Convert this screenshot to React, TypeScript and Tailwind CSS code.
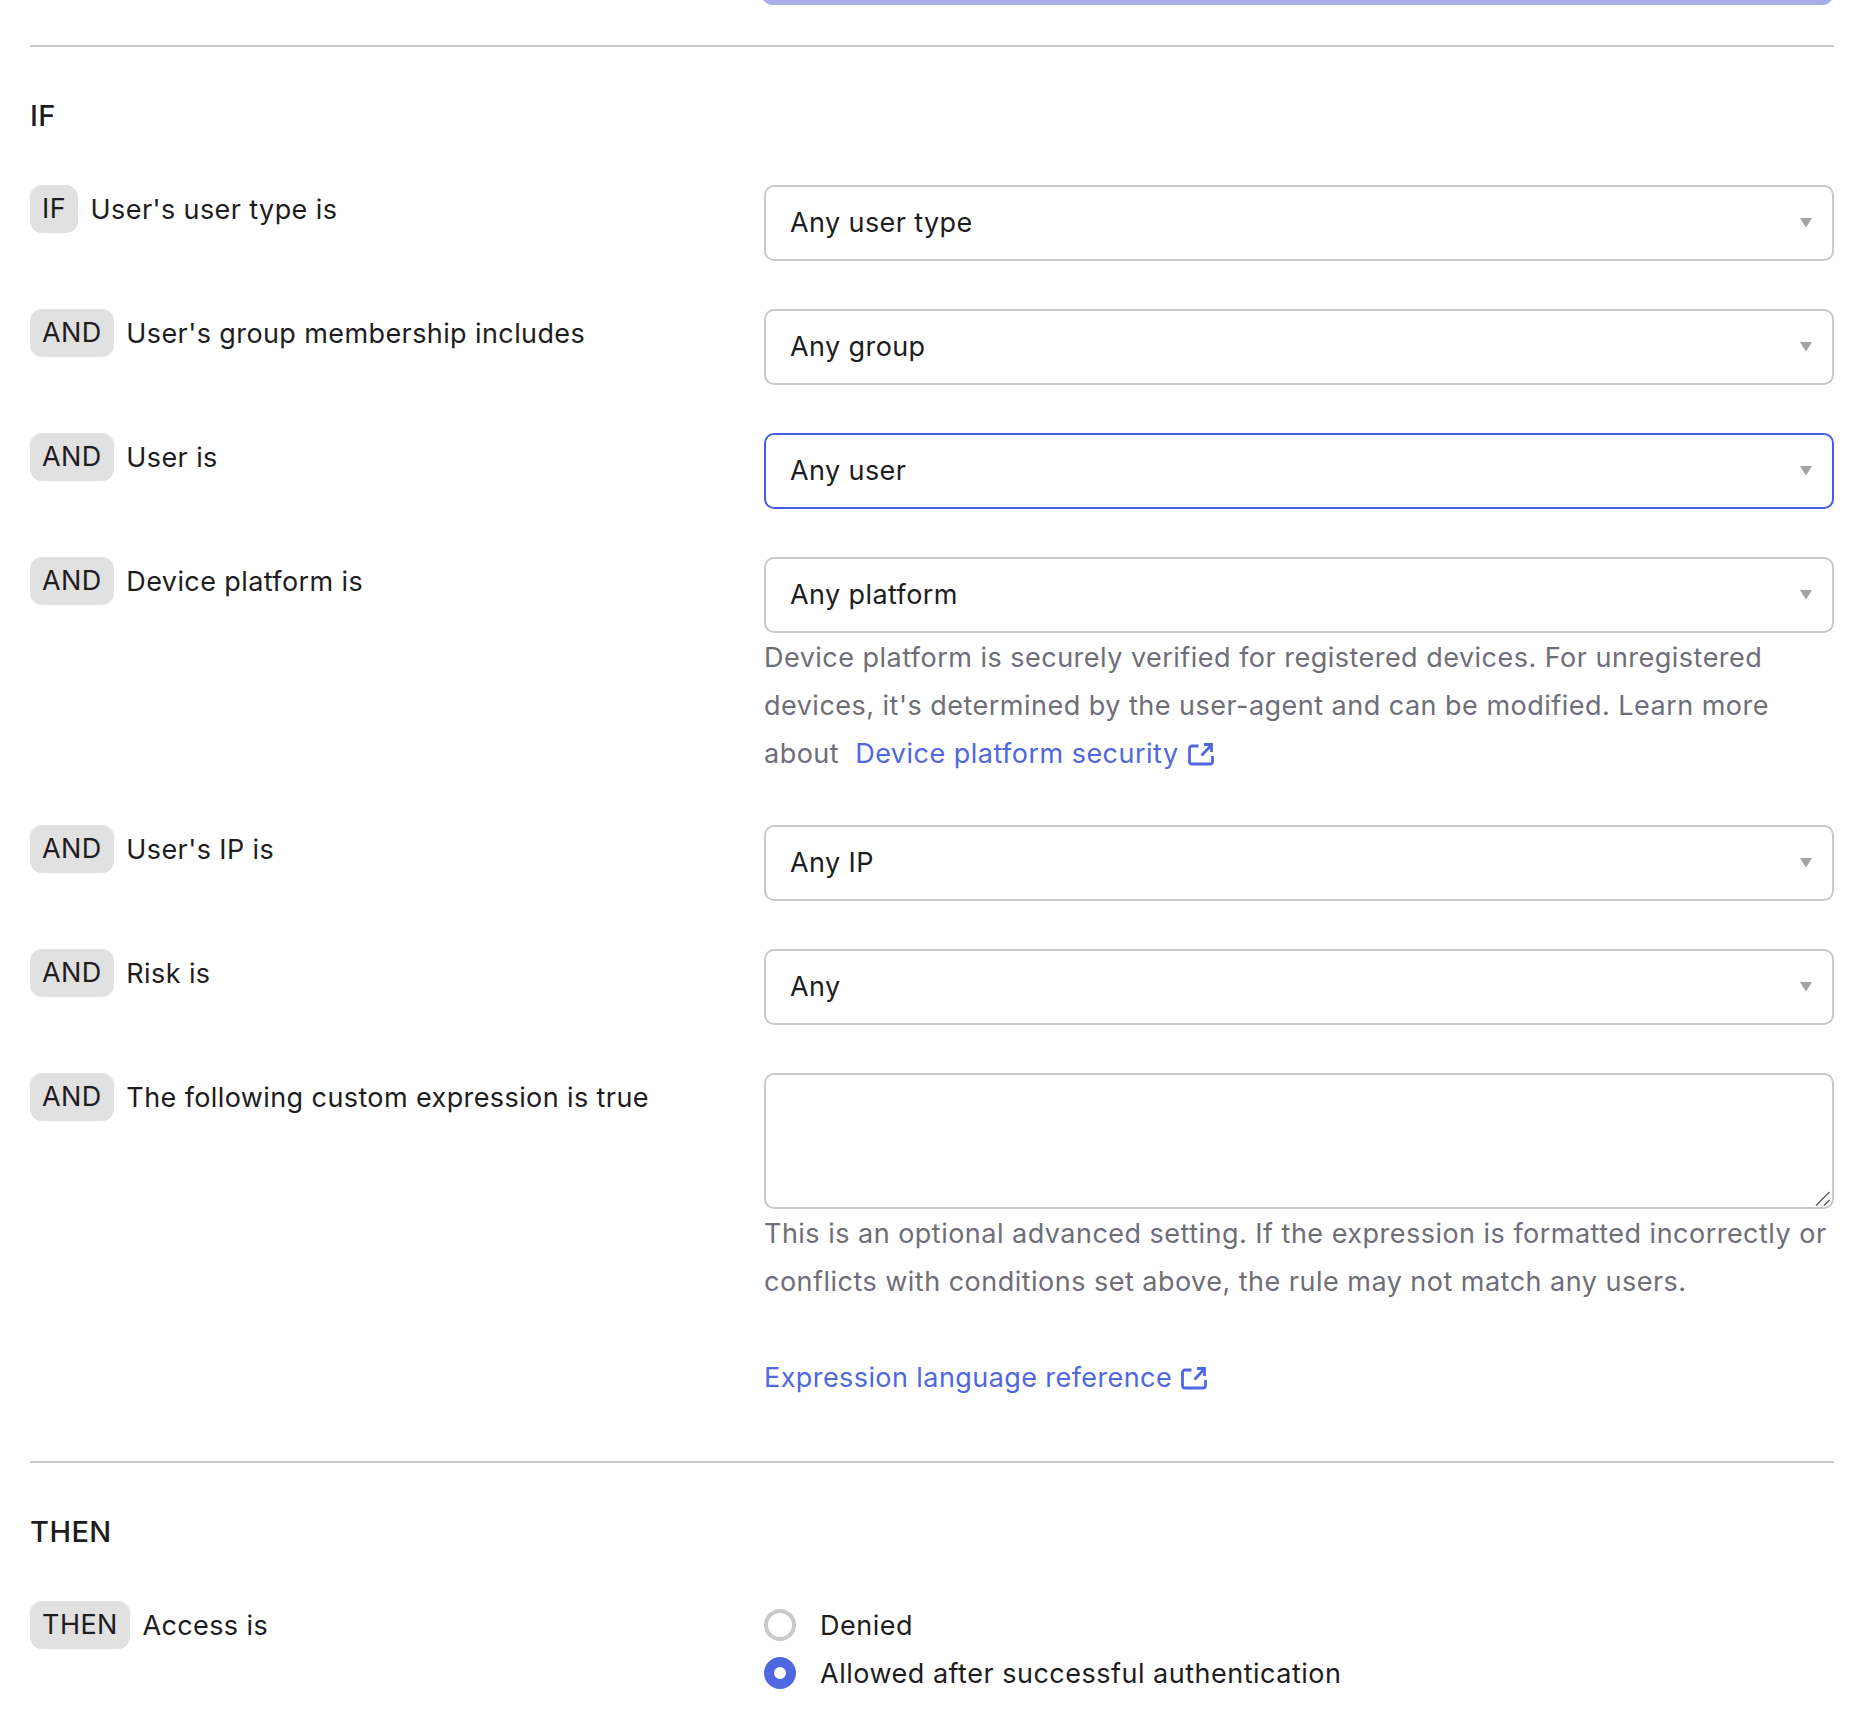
const Triangle = () => (
  <svg width="14" height="11" viewBox="0 0 14 11" className="mb-[2px] shrink-0">
    <path d="M1 1h12L7 10.500z" fill="#a3a3a3" />
  </svg>
)

const ExternalIcon = () => (
  <svg width="26" height="24" viewBox="0 0 26 24" fill="none" stroke="#4f67e0" strokeWidth="2.8" className="ml-[1px] inline-block align-[-3px]">
    <path d="M10.500 4H4A2.500 2.500 0 0 0 1.500 6.500v13A2.500 2.500 0 0 0 4 22h18a2.500 2.500 0 0 0 2.500-2.500V14" />
    <path d="M13.500 13.500 23 3.500" />
    <path d="M16 2.500h7.500V10" />
  </svg>
)

const Row = ({ tag, label, children }: { tag: string; label: string; children: React.ReactNode }) => (
  <div className="grid grid-cols-[734px_1070px]">
    <div className="flex items-start">
      <span className="flex h-[48px] items-center rounded-[12px] bg-[#e1e1e1] px-[12px]">{tag}</span>
      <span className="ml-[12.5px] pt-[1px] leading-[48px] tracking-[0.4px]">{label}</span>
    </div>
    <div>{children}</div>
  </div>
)

const Select = ({ value, focused }: { value: string; focused?: boolean }) => (
  <div
    className={`flex h-[76px] items-center justify-between rounded-[10px] border-2 pl-[24px] pr-[19px] ${
      focused ? "border-[#465de2]" : "border-[#c9c9c9]"
    }`}
  >
    <span className="pt-[1px] tracking-[0.4px]">{value}</span>
    <Triangle />
  </div>
)

const Help = ({ children }: { children: React.ReactNode }) => (
  <p className="leading-[48px] tracking-[0.48px] text-[#6e6e78]">{children}</p>
)

export default function App() {
  return (
    <div className="min-h-[1734px] bg-white pl-[30px] pr-[26px] font-['Inter',sans-serif] text-[27px] tracking-[0.45px] text-[#1d1d21]">
      <div className="ml-[731px] h-[5px] overflow-hidden">
        <div className="-mt-[30px] h-[35px] rounded-[12px] bg-[#a5aeea]" />
      </div>
      <div className="mt-[40px] h-[2px] bg-[#c9c9c9]" />

      <h2 className="mt-[49px] text-[29px] font-medium leading-[40px]">IF</h2>

      <div className="mt-[49px] flex flex-col gap-[48px]">
        <Row tag="IF" label="User's user type is">
          <Select value="Any user type" />
        </Row>
        <Row tag="AND" label="User's group membership includes">
          <Select value="Any group" />
        </Row>
        <Row tag="AND" label="User is">
          <Select value="Any user" focused />
        </Row>
        <Row tag="AND" label="Device platform is">
          <Select value="Any platform" />
          <div className="-mb-[1px] pt-[1px]">
            <Help>
              Device platform is securely verified for registered devices. For unregistered devices, it's determined by
              the user-agent and can be modified. Learn more about{" "}
              <a className="ml-[8px] text-[#4f67e0]">
                Device platform security <ExternalIcon />
              </a>
            </Help>
          </div>
        </Row>
        <Row tag="AND" label="User's IP is">
          <Select value="Any IP" />
        </Row>
        <Row tag="AND" label="Risk is">
          <Select value="Any" />
        </Row>
        <Row tag="AND" label="The following custom expression is true">
          <div className="relative mb-[1px]">
            <textarea className="block h-[136px] w-full resize-none rounded-[10px] border-2 border-[#c9c9c9]" />
            <svg width="15" height="15" viewBox="0 0 15 15" className="absolute bottom-[3px] right-[4px]" stroke="#555555" strokeWidth="1.300">
              <path d="M1 14.500 14.500 1" />
              <path d="M9 14.500 14.500 9" />
            </svg>
          </div>
          <Help>
            This is an optional advanced setting. If the expression is formatted incorrectly or conflicts with
            conditions set above, the rule may not match any users.
          </Help>
          <a className="mt-[48px] block leading-[48px] tracking-[0.42px] text-[#4f67e0]">
            Expression language reference <ExternalIcon />
          </a>
        </Row>
      </div>

      <div className="mt-[59px] h-[2px] bg-[#c9c9c9]" />

      <h2 className="mt-[49px] text-[29px] font-medium leading-[40px]">THEN</h2>

      <div className="mt-[49px]">
        <Row tag="THEN" label="Access is">
          <div className="flex h-[48px] items-center">
            <span className="h-[32px] w-[32px] rounded-full border-[4px] border-[#c9c9c9]" />
            <span className="ml-[24px] pt-[2px] tracking-[0.5px]">Denied</span>
          </div>
          <div className="flex h-[48px] items-center">
            <span className="h-[32px] w-[32px] rounded-full border-[10px] border-[#4f67e0]" />
            <span className="ml-[24px] pt-[2px] tracking-[0.5px]">Allowed after successful authentication</span>
          </div>
        </Row>
      </div>
    </div>
  )
}
